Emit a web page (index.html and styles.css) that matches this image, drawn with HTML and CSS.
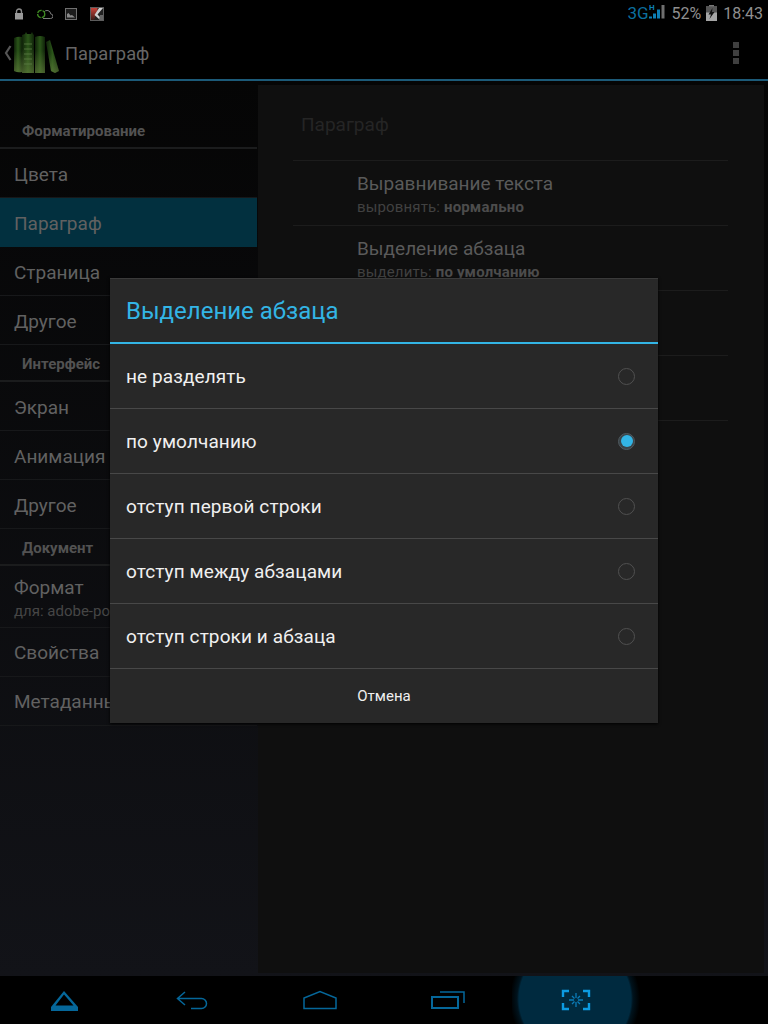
FILE: index.html
```html
<!DOCTYPE html>
<html lang="ru">
<head>
    <meta charset="UTF-8">
    <title>Параграф</title>
    <link rel="stylesheet" href="styles.css">
</head>
<body>
    <div class="screen">
        <!-- Status bar -->
        <div class="status-bar">
            <div class="status-icons">
                <span class="slot"><svg width="10" height="12" viewBox="0 0 10 12"><path d="M2.500 5V3.500a2.500 2.500 0 0 1 5 0V5" fill="none" stroke="#8a8a8a" stroke-width="1.400"/><rect x="1" y="5" width="8" height="6.500" fill="#999"/></svg></span>
                <span class="slot"><svg width="16" height="10" viewBox="0 0 16 10"><path d="M6 9.500h7.500a2.300 2.300 0 0 0 .2-4.600A3.600 3.600 0 0 0 7 3.200" fill="none" stroke="#7a7a7a" stroke-width="1"/><circle cx="4.200" cy="5" r="3.600" fill="none" stroke="#3f8a22" stroke-width="1.300" stroke-dasharray="5 1"/></svg></span>
                <span class="slot"><svg width="12" height="12" viewBox="0 0 12 12"><rect x="0.500" y="0.500" width="11" height="11" fill="#1c1c1c" stroke="#707070"/><path d="M2 9.500V6l1.500-1L5.500 7.500 7 7l3 2.500z" fill="#8a8a8a"/></svg></span>
                <span class="slot"><svg width="14" height="14" viewBox="0 0 14 14">
                    <defs>
                        <linearGradient id="kavRed" x1="0" y1="0" x2="0" y2="1">
                            <stop offset="0" stop-color="#c8433a"/>
                            <stop offset="1" stop-color="#3c1a16"/>
                        </linearGradient>
                    </defs>
                    <rect x="0.500" y="0.500" width="13" height="13" fill="#222" stroke="#5c5c5c"/>
                    <path d="M1 1h6.500v3L4 13H1z" fill="url(#kavRed)"/>
                    <path d="M9 1h4L7.500 7.500 11 11 9.500 12.500 4.500 8z" fill="#cfcfcf"/>
                    <path d="M10 8h3v5H9z" fill="#666"/>
                </svg></span>
            </div>
            <div class="status-right">
                <span class="net">3G</span>
                <svg class="signal" width="16" height="18" viewBox="0 0 16 18">
                    <path d="M0 12.500h3v2H0zM4 9.500h3v5H4zM8 5.500h3v9H8z" fill="#0d7fb5"/>
                    <path d="M12.500 1h3v13.500h-3z" fill="#6f6f6f"/>
                    <text x="0" y="6" class="signal-h">H</text>
                </svg>
                <span class="percent">52%</span>
                <svg class="battery" width="11" height="16" viewBox="0 0 11 16"><path d="M3 0h5v1.500H3z" fill="#777"/><rect y="1.500" width="11" height="14.500" fill="#a5a5a5"/><rect y="1.500" width="11" height="6" fill="#555"/><path d="M6.500 3L2.500 9.500h2.500L3.500 14 8.500 7H6z" fill="#111"/></svg>
                <span class="clock">18:43</span>
            </div>
        </div>

        <!-- Action bar -->
        <header class="action-bar">
            <svg class="chevron" width="8" height="16" viewBox="0 0 8 16"><path d="M6.500 1L2 8l4.500 7" fill="none" stroke="#555" stroke-width="2.200"/></svg>
            <svg class="logo" width="46" height="42" viewBox="0 0 46 42">
                <defs>
                    <linearGradient id="bookGreen" x1="0" y1="0" x2="1" y2="0">
                        <stop offset="0" stop-color="#0f2209"/>
                        <stop offset="0.5" stop-color="#2a5419"/>
                        <stop offset="1" stop-color="#0f2209"/>
                    </linearGradient>
                    <linearGradient id="bookLight" x1="0" y1="0" x2="0" y2="1">
                        <stop offset="0.4" stop-color="#6f8a45" stop-opacity="0"/>
                        <stop offset="1" stop-color="#6f8a45" stop-opacity="0.55"/>
                    </linearGradient>
                    <g id="books">
                        <path d="M1 6q4-2 8-1v35q-4 1-8-1z"/>
                        <path d="M9 3l3-1 1-2 1 2h4l1-2 1 2 1 1v38H9z"/>
                        <path d="M22 5q5-2 10 0v36H22z"/>
                        <path d="M33 10l4-2 9 31-4 2-4-2z"/>
                    </g>
                </defs>
                <use href="#books" fill="url(#bookGreen)"/>
                <use href="#books" fill="url(#bookLight)"/>
                <path d="M11 12h8M11 17h8M11 22h8M11 27h8M11 32h8" stroke="#5d7f47" stroke-width="0.800"/>
            </svg>
            <span class="action-title">Параграф</span>
            <div class="overflow-menu"><i></i><i></i><i></i></div>
        </header>

        <!-- Settings: categories on the left, options on the right -->
        <main class="content">
            <nav class="sidebar">
                <div class="group-title">Форматирование</div>
                <div class="side-item">Цвета</div>
                <div class="side-item selected">Параграф</div>
                <div class="side-item">Страница</div>
                <div class="side-item">Другое</div>
                <div class="group-title">Интерфейс</div>
                <div class="side-item">Экран</div>
                <div class="side-item">Анимация</div>
                <div class="side-item">Другое</div>
                <div class="group-title">Документ</div>
                <div class="side-item tall">
                    <span>Формат</span>
                    <small>для: adobe-portable</small>
                </div>
                <div class="side-item">Свойства</div>
                <div class="side-item">Метаданные</div>
            </nav>
            <section class="panel">
                <div class="panel-title">Параграф</div>
                <div class="option">
                    <div class="option-name">Выравнивание текста</div>
                    <div class="option-value">выровнять: <b>нормально</b></div>
                </div>
                <div class="option">
                    <div class="option-name">Выделение абзаца</div>
                    <div class="option-value">выделить: <b>по умолчанию</b></div>
                </div>
                <div class="option"></div>
                <div class="option"></div>
            </section>
        </main>

        <!-- Navigation bar -->
        <footer class="nav-bar">
            <div class="nav-btn">
                <svg width="30" height="24" viewBox="0 0 30 24"><path fill-rule="evenodd" d="M15 3L2 19v4h27v-4zM15 6.500L6.500 17.500h18z" fill="#05679a"/></svg>
            </div>
            <div class="nav-btn">
                <svg width="34" height="20" viewBox="0 0 34 20"><path d="M10 2L2.500 8.500l7.500 6.500M3 8.500h23.500a5 5 0 0 1 0 10H16" fill="none" stroke="#05679a" stroke-width="1.500"/></svg>
            </div>
            <div class="nav-btn">
                <svg width="34" height="20" viewBox="0 0 34 20"><path d="M1 18.500V8L17 1.500 33 8v10.500z" fill="none" stroke="#05679a" stroke-width="1.500"/></svg>
            </div>
            <div class="nav-btn">
                <svg width="34" height="20" viewBox="0 0 34 20"><rect x="1" y="7" width="26" height="11" fill="none" stroke="#05679a" stroke-width="2"/><path d="M9 2h24v11" fill="none" stroke="#05679a" stroke-width="1.500"/></svg>
            </div>
            <div class="nav-btn glow">
                <svg width="30" height="22" viewBox="0 0 30 22"><path d="M8 2H2v6M22 2h6v6M8 20H2v-6M22 20h6v-6" fill="none" stroke="#0c9be2" stroke-width="2.400"/><path d="M15 4v5M15 13v5M8 11h5M17 11h5M11 7l2.500 2.500M19 7l-2.500 2.500M11 15l2.500-2.500M19 15l-2.500-2.500" stroke="#0a7cb8" stroke-width="1.300"/></svg>
            </div>
            <div class="nav-btn"></div>
        </footer>

        <!-- Dialog -->
        <div class="dialog">
            <div class="dialog-title">Выделение абзаца</div>
            <div class="choice"><span>не разделять</span><span class="radio"></span></div>
            <div class="choice"><span>по умолчанию</span><span class="radio checked"></span></div>
            <div class="choice"><span>отступ первой строки</span><span class="radio"></span></div>
            <div class="choice"><span>отступ между абзацами</span><span class="radio"></span></div>
            <div class="choice"><span>отступ строки и абзаца</span><span class="radio"></span></div>
            <div class="dialog-cancel">Отмена</div>
        </div>
    </div>
</body>
</html>
```

FILE: styles.css
```css
html, body {
    margin: 0;
    padding: 0;
    background-color: #000;
    font-family: Roboto, "Liberation Sans", sans-serif;
}

.screen {
    position: relative;
    width: 768px;
    height: 1024px;
    display: flex;
    flex-direction: column;
    overflow: hidden;
}

.status-bar {
    height: 26px;
    display: flex;
    justify-content: space-between;
    align-items: center;
    background-color: #000;
    flex-shrink: 0;
}

.status-icons {
    display: flex;
    padding-left: 6px;
    padding-top: 1px;
}

.slot {
    width: 26px;
    display: flex;
    justify-content: center;
    align-items: center;
}

.status-right {
    display: flex;
    align-items: center;
    padding-right: 5px;
    font-size: 16px;
    color: #8f8f8f;
}

.net {
    color: #0b6f9f;
    width: 20px;
    font-size: 17px;
}

.signal {
    margin-left: 2px;
    margin-right: 6px;
}

.signal-h {
    font-size: 8px;
    font-weight: bold;
    fill: #0d7fb5;
}

.battery {
    margin-left: 5px;
    margin-right: 6px;
}

.action-bar {
    height: 53px;
    display: flex;
    align-items: center;
    padding-left: 4px;
    padding-right: 29px;
    border-bottom: 2px solid #1c5a78;
    flex-shrink: 0;
}

.logo {
    margin-left: 1px;
    margin-top: 1px;
}

.action-title {
    margin-left: 6px;
    margin-top: 2px;
    font-size: 18.3px;
    color: #666;
    flex-grow: 1;
}

.overflow-menu {
    display: flex;
    flex-direction: column;
    gap: 2px;
}

.overflow-menu i {
    width: 6px;
    height: 6px;
    background-color: #3f3f3f;
}

.content {
    flex: 1;
    display: flex;
    background: linear-gradient(#050505, #121318);
    min-height: 0;
}

.sidebar {
    width: 257px;
    padding-top: 31px;
    flex-shrink: 0;
}

.group-title {
    height: 35px;
    line-height: 38px;
    padding-left: 22px;
    font-size: 15px;
    font-weight: bold;
    color: #525252;
    border-bottom: 2px solid #1b1c1d;
}

.side-item {
    height: 48px;
    line-height: 52px;
    padding-left: 14px;
    font-size: 19px;
    color: #616161;
    border-bottom: 1px solid #17181a;
}

.side-item.selected {
    background-color: #02303f;
    border-bottom-color: #02303f;
}

.side-item.tall {
    height: 61px;
    line-height: 22px;
    display: flex;
    flex-direction: column;
}

.side-item.tall ~ .side-item {
    line-height: 50px;
}

.side-item.tall span {
    margin-top: 11px;
}

.side-item small {
    font-size: 15px;
    line-height: 18px;
    margin-top: 3px;
    color: #464646;
    white-space: nowrap;
}

.panel {
    flex: 1;
    margin: 4px 4px 3px 1px;
    padding: 0 36px 0 35px;
    background-color: #0f0f0f;
}

.panel-title {
    height: 75px;
    line-height: 80px;
    padding-left: 8px;
    font-size: 19px;
    color: #252525;
    border-bottom: 1px solid #1c1c1c;
}

.option {
    height: 64px;
    padding-left: 64px;
    border-bottom: 1px solid #1c1c1c;
}

.option-name {
    padding-top: 12px;
    font-size: 19px;
    line-height: 22px;
    color: #5a5a5a;
}

.option-value {
    font-size: 15px;
    line-height: 20px;
    letter-spacing: 0.15px;
    margin-top: 2px;
    color: #414141;
}

.option-value b {
    color: #4c4c4c;
}

.nav-bar {
    height: 48px;
    display: grid;
    grid-template-columns: repeat(6, 128px);
    background-color: #000;
    flex-shrink: 0;
}

.nav-btn {
    display: flex;
    justify-content: center;
    align-items: center;
}

.nav-btn.glow {
    background: radial-gradient(circle at 63px 23px, #002a3f 0, #002a3f 56px, #00131d 58px, #000 65px);
}

.dialog {
    position: absolute;
    top: 278px;
    left: 110px;
    width: 548px;
    height: 445px;
    background-color: #282828;
    box-shadow: inset 0 1px #3a3a3a, 0 1px 3px #000;
}

.dialog-title {
    height: 64px;
    line-height: 66px;
    padding-left: 16px;
    font-size: 24px;
    color: #33b5e5;
    border-bottom: 2px solid #33b5e5;
}

.choice {
    height: 64px;
    display: flex;
    justify-content: space-between;
    align-items: center;
    padding: 0 23px 0 16px;
    font-size: 19px;
    letter-spacing: 0.1px;
    color: #f0f0f0;
    border-bottom: 1px solid #484848;
}

.radio {
    width: 15px;
    height: 15px;
    border: 1.5px solid #505050;
    border-radius: 50%;
    position: relative;
}

.radio.checked {
    border-color: #4f5a60;
    background-color: #3a4347;
}

.radio.checked::after {
    content: "";
    position: absolute;
    top: 1.500px;
    left: 1.500px;
    width: 12px;
    height: 12px;
    border-radius: 50%;
    background-color: #33b5e5;
}

.dialog-cancel {
    height: 54px;
    line-height: 54px;
    text-align: center;
    font-size: 15px;
    color: #f0f0f0;
}
```
